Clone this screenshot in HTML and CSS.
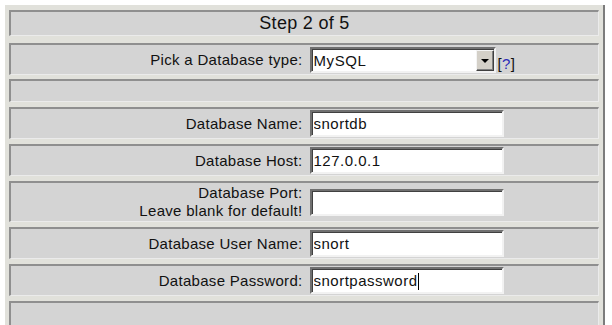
FILE: index.html
```html
<!DOCTYPE html>
<html lang="en">
<head>
  <meta charset="UTF-8" />
  <title>Setup - Step 2 of 5</title>
  <link rel="stylesheet" href="styles.css">
</head>
<body>

  <form class="wizard">
    <div class="row row-title">Step 2 of 5</div>

    <!-- Database type -->
    <div class="row row-type">
      <label class="label" for="dbtype">Pick a Database type:</label>
      <div class="field">
        <span class="select-wrap">
          <select class="select" id="dbtype"><option>MySQL</option></select>
          <span class="select-btn"></span>
        </span>
        <a class="help" href="#">[<span>?</span>]</a>
      </div>
    </div>

    <div class="row row-empty"></div>

    <!-- Connection -->
    <div class="row">
      <label class="label" for="dbname">Database Name:</label>
      <div class="field"><input class="text" id="dbname" type="text" value="snortdb"></div>
    </div>
    <div class="row">
      <label class="label" for="dbhost">Database Host:</label>
      <div class="field"><input class="text" id="dbhost" type="text" value="127.0.0.1"></div>
    </div>
    <div class="row">
      <label class="label" for="dbport">Database Port:<br>Leave blank for default!</label>
      <div class="field"><input class="text" id="dbport" type="text" value=""></div>
    </div>
    <div class="row">
      <label class="label" for="dbuser">Database User Name:</label>
      <div class="field"><input class="text" id="dbuser" type="text" value="snort"></div>
    </div>
    <div class="row">
      <label class="label" for="dbpass">Database Password:</label>
      <div class="field">
        <span class="caret-wrap">
          <input class="text" id="dbpass" type="text" value="snortpassword">
          <span class="caret"></span>
        </span>
      </div>
    </div>

    <div class="row row-last"></div>
  </form>

</body>
</html>
```

FILE: styles.css
```css
body {
  margin: 0;
  background: #fff;
  font-family: 'Liberation Sans', Arial, sans-serif;
  color: #111;
}

.wizard {
  margin: 5px 0 0 5px;
  width: 590px;
  padding: 5px 4px 4px 4px;
  background: #e1e1db;
  border-right: 2px solid #7c7c7c;
  display: flex;
  flex-direction: column;
  gap: 5px;
}

.row {
  display: grid;
  grid-template-columns: 1fr 1fr;
  align-items: center;
  background: #d4d4d4;
  border-style: solid;
  border-width: 2px 1px 1px 2px;
  border-color: #8f8f8f #ebebeb #ebebeb #8f8f8f;
  padding: 1px 0;
  font-size: 15px;
  letter-spacing: 0.3px;
  box-sizing: border-box;
}

.row-title {
  display: block;
  height: 26px;
  padding: 0;
  margin-bottom: 2px;
  text-align: center;
  font-size: 18px;
  line-height: 23px;
}

.row-type {
  padding: 2px 0 1px;
  margin-bottom: -1px;
}

.row-empty {
  height: 23px;
}

.row-last {
  height: 40px;
}

.label {
  text-align: right;
  padding-right: 2px;
  line-height: 18px;
}

.field {
  display: flex;
  align-items: center;
  padding-left: 5px;
  gap: 2px;
}

.text {
  width: 194px;
  height: 27px;
  box-sizing: border-box;
  margin: 0;
  padding: 0 2px;
  border: 2px solid;
  border-color: #707070 #f2f2f2 #f2f2f2 #707070;
  box-shadow: inset 1px 1px #404040;
  background: #fff;
  font: 15px 'Liberation Sans', Arial, sans-serif;
  letter-spacing: 0.5px;
  color: #111;
  outline: none;
}

.select-wrap {
  position: relative;
  display: inline-block;
  width: 186px;
  height: 26px;
}

.select {
  appearance: none;
  width: 100%;
  height: 100%;
  box-sizing: border-box;
  margin: 0;
  padding: 0 2px;
  border: 2px solid;
  border-color: #707070 #f2f2f2 #f2f2f2 #707070;
  box-shadow: inset 1px 1px #404040;
  border-radius: 0;
  background: #fff;
  font: 15px 'Liberation Sans', Arial, sans-serif;
  letter-spacing: 0.6px;
  color: #111;
}

.select-btn {
  position: absolute;
  right: 2px;
  top: 3px;
  width: 18px;
  height: 21px;
  box-sizing: border-box;
  background: #d4d0c8;
  border: 1px solid;
  border-color: #f4f4f4 #404040 #404040 #f4f4f4;
  box-shadow: inset -1px -1px #808080;
  display: flex;
  align-items: center;
  justify-content: center;
}

.select-btn::after {
  content: '';
  border-style: solid;
  border-width: 4px 4px 0 4px;
  border-color: #000 transparent transparent transparent;
}

.help {
  align-self: flex-end;
  line-height: 18px;
  color: #111;
  text-decoration: none;
}

.help span {
  color: #2b2bb8;
}

.caret-wrap {
  position: relative;
  display: inline-block;
}

.caret {
  position: absolute;
  left: 108px;
  top: 6px;
  width: 1px;
  height: 17px;
  background: #000;
}
```
